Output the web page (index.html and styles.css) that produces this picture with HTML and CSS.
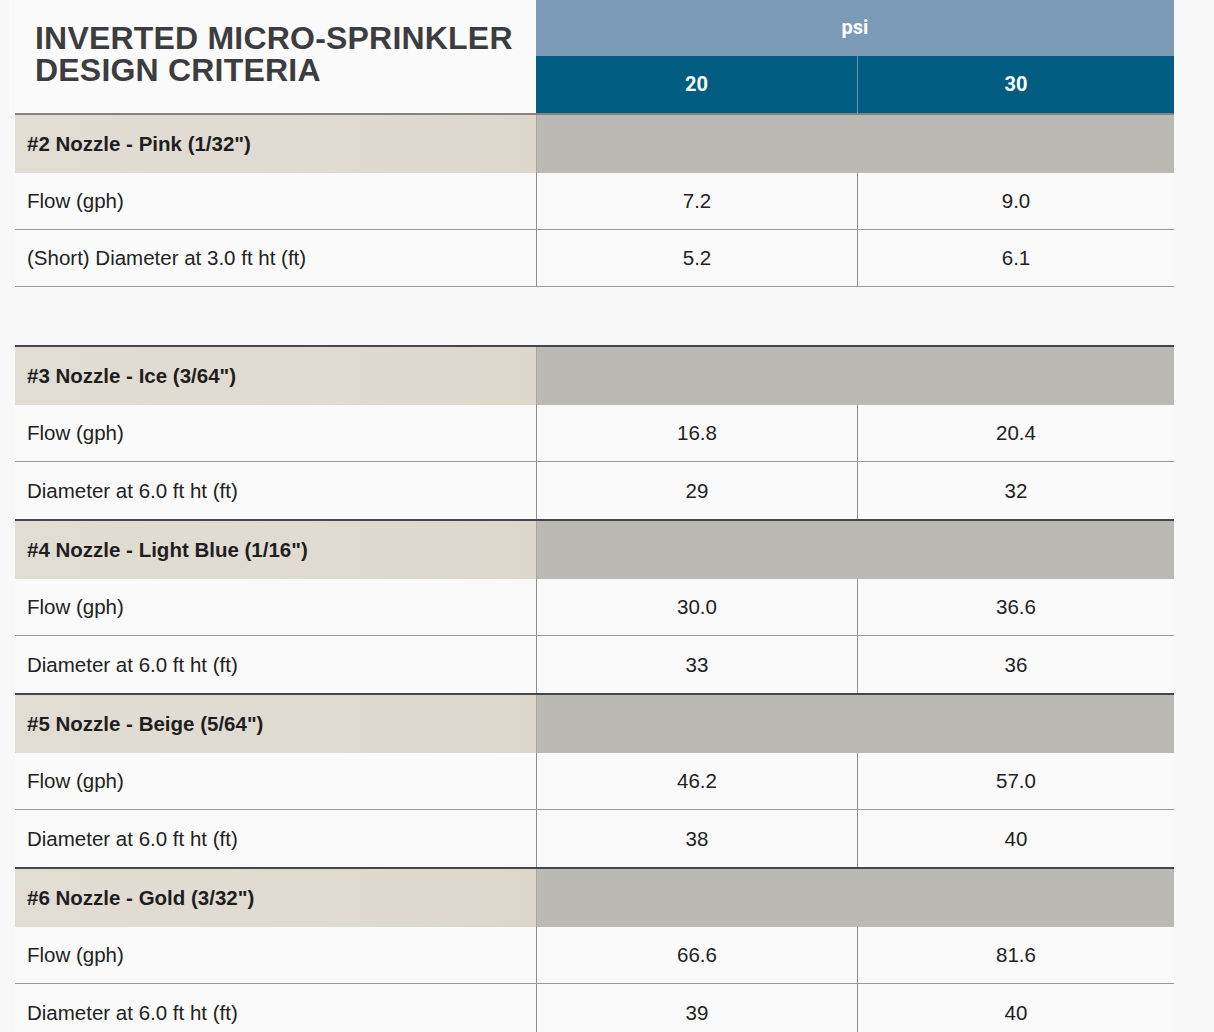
FILE: index.html
```html
<!DOCTYPE html>
<html lang="en">
<head>
<meta charset="utf-8">
<title>Inverted Micro-Sprinkler Design Criteria</title>
<link rel="stylesheet" href="styles.css">
</head>
<body>
<div class="sheet">
  <div class="head">
    <div class="title"><div class="t-line">INVERTED MICRO-SPRINKLER</div><div class="t-line">DESIGN CRITERIA</div></div>
    <div class="head-right">
      <div class="psi">psi</div>
      <div class="nums"><div class="num">20</div><div class="num num-2">30</div></div>
    </div>
  </div>

  <div class="group group-first"><div class="g-label">#2 Nozzle - Pink (1/32")</div><div class="g-fill"></div></div>
  <div class="row row-line"><div class="label">Flow (gph)</div><div class="val">7.2</div><div class="val">9.0</div></div>
  <div class="row row-line"><div class="label">(Short) Diameter at 3.0 ft ht (ft)</div><div class="val">5.2</div><div class="val">6.1</div></div>
  <div class="spacer"></div>

  <div class="group"><div class="g-label">#3 Nozzle - Ice (3/64")</div><div class="g-fill"></div></div>
  <div class="row row-line"><div class="label">Flow (gph)</div><div class="val">16.8</div><div class="val">20.4</div></div>
  <div class="row"><div class="label">Diameter at 6.0 ft ht (ft)</div><div class="val">29</div><div class="val">32</div></div>

  <div class="group"><div class="g-label">#4 Nozzle - Light Blue (1/16")</div><div class="g-fill"></div></div>
  <div class="row row-line"><div class="label">Flow (gph)</div><div class="val">30.0</div><div class="val">36.6</div></div>
  <div class="row"><div class="label">Diameter at 6.0 ft ht (ft)</div><div class="val">33</div><div class="val">36</div></div>

  <div class="group"><div class="g-label">#5 Nozzle - Beige (5/64")</div><div class="g-fill"></div></div>
  <div class="row row-line"><div class="label">Flow (gph)</div><div class="val">46.2</div><div class="val">57.0</div></div>
  <div class="row"><div class="label">Diameter at 6.0 ft ht (ft)</div><div class="val">38</div><div class="val">40</div></div>

  <div class="group"><div class="g-label">#6 Nozzle - Gold (3/32")</div><div class="g-fill"></div></div>
  <div class="row row-line"><div class="label">Flow (gph)</div><div class="val">66.6</div><div class="val">81.6</div></div>
  <div class="row"><div class="label">Diameter at 6.0 ft ht (ft)</div><div class="val">39</div><div class="val">40</div></div>
</div>
</body>
</html>
```
FILE: styles.css
```css
* { box-sizing: border-box; }
html, body { margin: 0; padding: 0; }
body {
  background: #f8f8f8;
  font-family: "Liberation Sans", Arial, sans-serif;
  color: #222;
  overflow: hidden;
}
.sheet {
  width: 1159px;
  margin-left: 15px;
}
.head {
  display: grid;
  grid-template-columns: 521px 638px;
  height: 113px;
}
.title {
  background: #fbfbfb;
  padding: 22px 0 0 20px;
  font-weight: 700;
  font-size: 32px;
  letter-spacing: 0.2px;
  color: #3d3d3f;
}
.t-line {
  line-height: 33px;
  height: 32px;
}
.head-right {
  display: flex;
  flex-direction: column;
}
.psi {
  height: 56px;
  background: #7a9ab5;
  color: #fff;
  font-family: Roboto, "Liberation Sans", sans-serif;
  font-weight: 700;
  font-size: 20px;
  display: flex;
  align-items: center;
  justify-content: center;
  padding-bottom: 2px;
}
.nums {
  height: 57px;
  display: grid;
  grid-template-columns: 321px 317px;
  background: #005c81;
}
.num {
  display: flex;
  align-items: center;
  justify-content: center;
  color: #fff;
  font-family: Roboto, "Liberation Sans", sans-serif;
  font-weight: 700;
  font-size: 20px;
  padding-bottom: 2px;
}
.num-2 { border-left: 1px solid #6f92aa; }

.group {
  display: grid;
  grid-template-columns: 521px 638px;
  height: 60px;
  border-top: 2px solid #43474c;
}
.group-first { border-top-color: #87827c; }
.g-label {
  background: linear-gradient(90deg, #e2ddd3 0%, #e0dbd1 60%, #dcd6cb 100%);
  padding-left: 12px;
  display: flex;
  align-items: center;
  font-weight: 700;
  font-size: 20.5px;
  color: #1e1e1e;
  padding-bottom: 1px;
}
.g-fill {
  background: #bbb9b4;
  border-left: 1px solid #a8a6a2;
}

.row {
  display: grid;
  grid-template-columns: 521px 321px 317px;
  height: 57px;
  background: #fafafa;
  font-size: 20.5px;
}
.row-line { border-bottom: 1px solid #9a9a9a; }
.label {
  display: flex;
  align-items: center;
  padding-left: 12px;
  color: #222;
}
.val {
  display: flex;
  align-items: center;
  justify-content: center;
  border-left: 1px solid #8f8f8f;
  color: #222;
}
.spacer { height: 58px; }
```
